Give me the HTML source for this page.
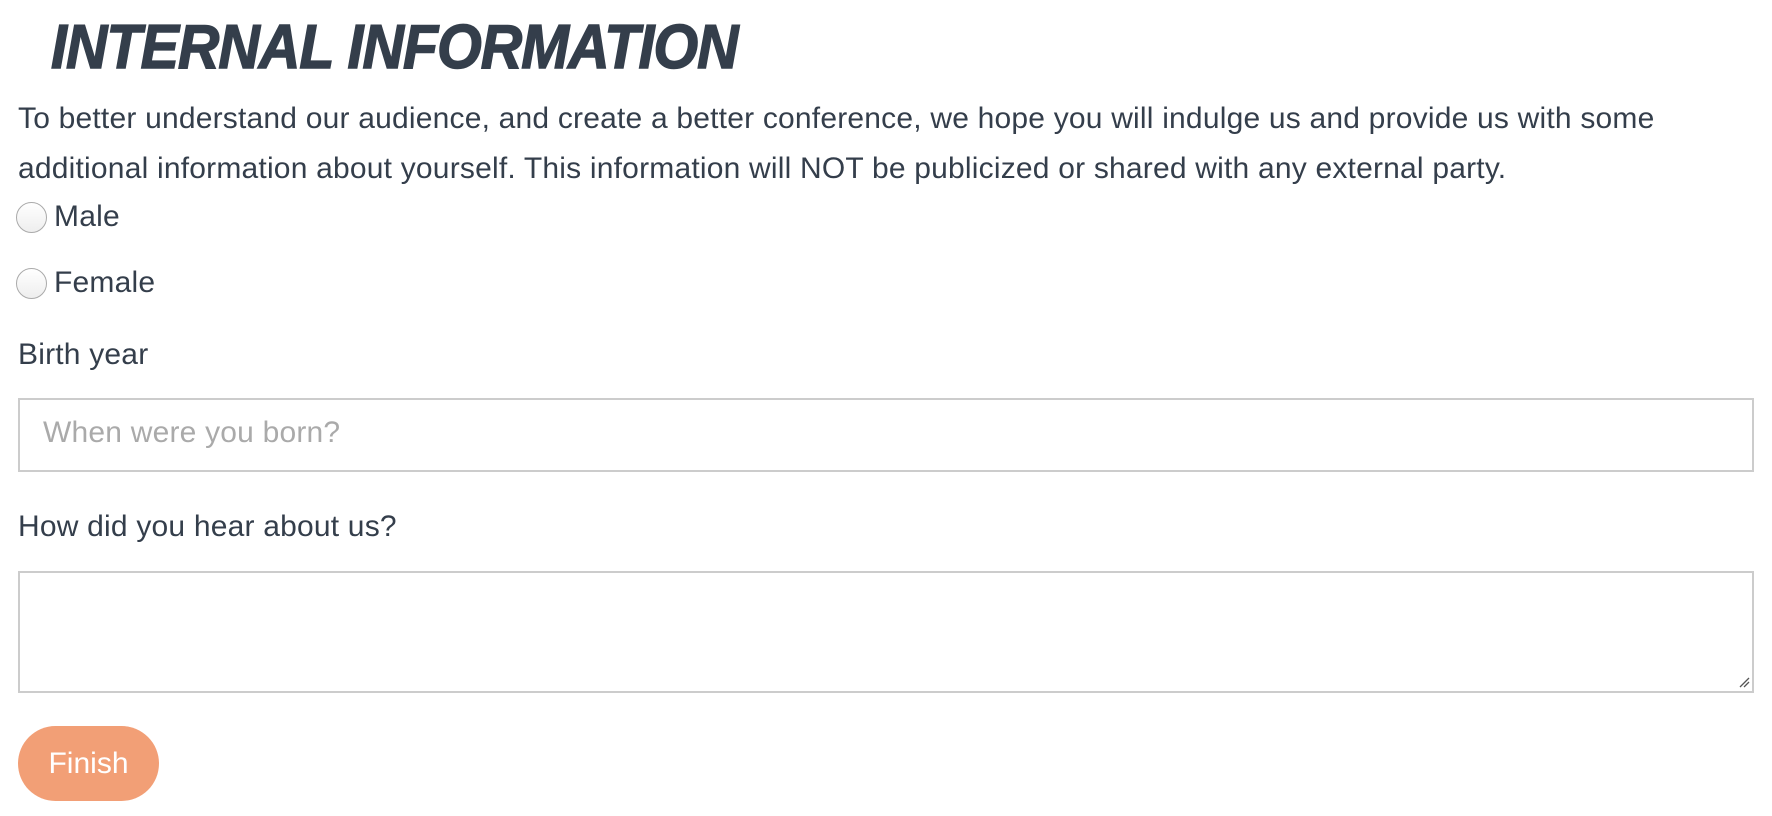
<!DOCTYPE html>
<html><head><style>
body{margin:0;background:#fff;width:1772px;height:816px;overflow:hidden;font-family:"Liberation Sans",sans-serif;color:#343e4b;position:relative}
.a{position:absolute;white-space:nowrap}
h1{position:absolute;left:51px;top:12px;margin:0;font-size:62px;font-weight:bold;font-style:italic;transform:scaleX(0.925);transform-origin:left top;letter-spacing:-1px;color:#343e4b;-webkit-text-stroke:1.5px #343e4b}
.p{font-size:30px;line-height:50px;letter-spacing:0.2px}
.r{position:absolute;width:29px;height:29px;border:1px solid #aaa;border-radius:50%;background:linear-gradient(#fff,#eee)}
.box{position:absolute;border:2px solid #ccc;box-sizing:border-box;background:#fff}
</style></head><body>
<h1>INTERNAL INFORMATION</h1>
<div class="a p" style="left:18px;top:94px">To better understand our audience, and create a better conference, we hope you will indulge us and provide us with some<br>additional information about yourself. This information will NOT be publicized or shared with any external party.</div>
<div class="r" style="left:16px;top:202px"></div>
<div class="a p" style="left:54px;top:192px">Male</div>
<div class="r" style="left:16px;top:268px"></div>
<div class="a p" style="left:54px;top:258px">Female</div>
<div class="a p" style="left:18px;top:330px">Birth year</div>
<div class="box" style="left:18px;top:398px;width:1736px;height:74px"></div>
<div class="a p" style="left:43px;top:408px;color:#aaa">When were you born?</div>
<div class="a p" style="left:18px;top:502px">How did you hear about us?</div>
<div class="box" style="left:18px;top:571px;width:1736px;height:122px"></div>
<svg class="a" style="left:1738px;top:676px" width="12" height="12"><path d="M2 11L11 2M6 11L11 6" stroke="#555" stroke-width="1.3"/></svg>
<div class="a" style="left:18px;top:726px;width:141px;height:75px;border-radius:38px;background:#f29f76;color:#fff;font-size:30px;line-height:75px;text-align:center">Finish</div>
</body></html>
